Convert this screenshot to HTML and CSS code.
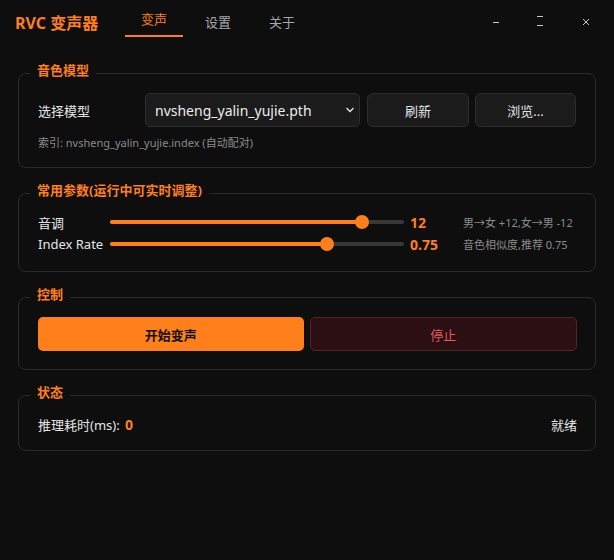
FILE: index.html
```html
<!DOCTYPE html>
<html lang="zh-CN">
<head>
    <meta charset="UTF-8">
    <title>RVC 变声器</title>
    <link rel="stylesheet" href="styles.css">
</head>
<body>

<div class="app">
    <!-- Title bar -->
    <div class="titlebar">
        <div class="app-title">RVC 变声器</div>
        <div class="tabs">
            <div class="tab active">变声</div>
            <div class="tab">设置</div>
            <div class="tab">关于</div>
        </div>
        <div class="win-controls">
            <span class="win-btn">
                <svg width="10" height="12" viewBox="0 0 10 12"><path d="M2 6.5h6" stroke="#c8c8c8" stroke-width="1"/></svg>
            </span>
            <span class="win-btn">
                <svg width="10" height="14" viewBox="0 0 10 14"><path d="M2 1.5h6M2 10.5h6" stroke="#c8c8c8" stroke-width="1"/></svg>
            </span>
            <span class="win-btn">
                <svg width="10" height="12" viewBox="0 0 10 12"><path d="M2 3l6 6M8 3l-6 6" stroke="#c8c8c8" stroke-width="1"/></svg>
            </span>
        </div>
    </div>

    <div class="content">
        <!-- Model -->
        <fieldset class="group">
            <legend>音色模型</legend>
            <div class="model-row">
                <span class="label">选择模型</span>
                <div class="combo">
                    <span>nvsheng_yalin_yujie.pth</span>
                    <svg width="10" height="6" viewBox="0 0 10 6"><path d="M1.5 1l3.5 3.5 3.5-3.5" stroke="#e8e8e8" stroke-width="1.3" fill="none"/></svg>
                </div>
                <button class="btn">刷新</button>
                <button class="btn">浏览...</button>
            </div>
            <div class="hint">索引: nvsheng_yalin_yujie.index (自动配对)</div>
        </fieldset>

        <!-- Parameters -->
        <fieldset class="group params-group">
            <legend>常用参数(运行中可实时调整)</legend>
            <div class="param-row">
                <span class="param-label">音调</span>
                <div class="slider">
                    <div class="slider-fill" style="width: 87.5%"></div>
                    <div class="slider-handle" style="left: calc(7px + (100% - 14px) * 0.875)"></div>
                </div>
                <span class="param-value">12</span>
                <span class="param-hint">男→女 +12,女→男 -12</span>
            </div>
            <div class="param-row">
                <span class="param-label">Index Rate</span>
                <div class="slider">
                    <div class="slider-fill" style="width: 75%"></div>
                    <div class="slider-handle" style="left: calc(7px + (100% - 14px) * 0.75)"></div>
                </div>
                <span class="param-value">0.75</span>
                <span class="param-hint">音色相似度,推荐 0.75</span>
            </div>
        </fieldset>

        <!-- Control -->
        <fieldset class="group">
            <legend>控制</legend>
            <div class="control-row">
                <button class="start-button">开始变声</button>
                <button class="stop-button">停止</button>
            </div>
        </fieldset>

        <!-- Status -->
        <fieldset class="group status-group">
            <legend>状态</legend>
            <div class="status-row">
                <span>推理耗时(ms): <strong class="latency">0</strong></span>
                <span>就绪</span>
            </div>
        </fieldset>
    </div>
</div>

</body>
</html>
```

FILE: styles.css
```css
body {
    font-family: "Noto Sans", "Noto Sans CJK SC", sans-serif;
    background-color: #0e0e0e;
    color: #e4e4e4;
    margin: 0;
    padding: 0;
    font-size: 13px;
}
.app {
    width: 614px;
    height: 560px;
}
.titlebar {
    display: flex;
    align-items: center;
    height: 44px;
    padding-left: 15px;
}
.app-title {
    color: #ff7f1a;
    font-size: 16px;
    font-weight: bold;
    width: 110px;
}
.tabs {
    display: flex;
    gap: 6px;
    height: 44px;
}
.tab {
    width: 58px;
    display: flex;
    align-items: center;
    justify-content: center;
    color: #a8a8a8;
    font-size: 13px;
    box-sizing: border-box;
    padding-bottom: 1px;
}
.tab.active {
    color: #ff7f1a;
    border-bottom: 2px solid #ff7f1a;
    height: 37px;
    padding-top: 2px;
}
.win-controls {
    margin-left: auto;
    display: flex;
    align-items: center;
    padding-right: 4px;
}
.win-btn {
    width: 44px;
    display: flex;
    justify-content: center;
}
.win-btn + .win-btn + .win-btn {
    width: 48px;
}
.content {
    padding: 18px 18px 0 18px;
}
.group {
    border: 1px solid #2a2a2a;
    border-radius: 8px;
    margin: 0 0 14px 0;
    padding: 9px 18px 16px 19px;
    min-width: 0;
}
.group legend {
    color: #ff7f1a;
    font-weight: bold;
    font-size: 13px;
    line-height: 16px;
    margin-left: -8px;
    padding: 0 7px 6px 7px;
}
.params-group {
    padding-top: 7px;
    padding-bottom: 16px;
}
.status-group {
    padding-top: 8px;
}
.model-row {
    display: flex;
    align-items: center;
    height: 34px;
}
.label {
    width: 107px;
}
.combo {
    width: 215px;
    height: 34px;
    box-sizing: border-box;
    background-color: #1b1b1b;
    border: 1px solid #2e2e2e;
    border-radius: 5px;
    display: flex;
    align-items: center;
    justify-content: space-between;
    padding: 0 4px 0 9px;
    font-size: 14px;
    color: #ececec;
}
.btn {
    height: 34px;
    background-color: #1b1b1b;
    border: 1px solid #2e2e2e;
    border-radius: 6px;
    color: #e2e2e2;
    font-family: inherit;
    font-size: 13px;
    margin-left: 7px;
    width: 102px;
}
.btn + .btn {
    margin-left: 6px;
    width: 101px;
}
.hint {
    color: #8a8a8a;
    font-size: 11px;
    line-height: 15px;
    margin-top: 8px;
    padding-bottom: 1px;
}
.param-row {
    display: flex;
    align-items: center;
    height: 22px;
}
.param-label {
    width: 72px;
}
.slider {
    position: relative;
    width: 294px;
    height: 4px;
    background-color: #383838;
    border-radius: 2px;
}
.slider-fill {
    height: 4px;
    background-color: #ff7f1a;
    border-radius: 2px;
}
.slider-handle {
    position: absolute;
    top: -5px;
    width: 14px;
    height: 14px;
    margin-left: -7px;
    border-radius: 50%;
    background-color: #ff7f1a;
}
.param-value {
    color: #ff7f1a;
    font-weight: bold;
    font-size: 14px;
    width: 53px;
    margin-left: 6px;
}
.param-hint {
    color: #8a8a8a;
    font-size: 11px;
}
.control-row {
    display: flex;
    gap: 6px;
    height: 34px;
    padding-bottom: 2px;
}
.start-button {
    flex: 1;
    background-color: #ff7f1a;
    border: none;
    border-radius: 5px;
    color: #111;
    font-family: inherit;
    font-size: 13px;
    font-weight: bold;
}
.stop-button {
    flex: 1;
    background-color: #2c0f12;
    border: 1px solid #5a2026;
    border-radius: 5px;
    color: #e25a5e;
    font-family: inherit;
    font-size: 13px;
}
.status-row {
    display: flex;
    justify-content: space-between;
    align-items: center;
    height: 20px;
}
.latency {
    color: #ff7f1a;
    font-size: 14px;
    margin-left: 2px;
}
```
